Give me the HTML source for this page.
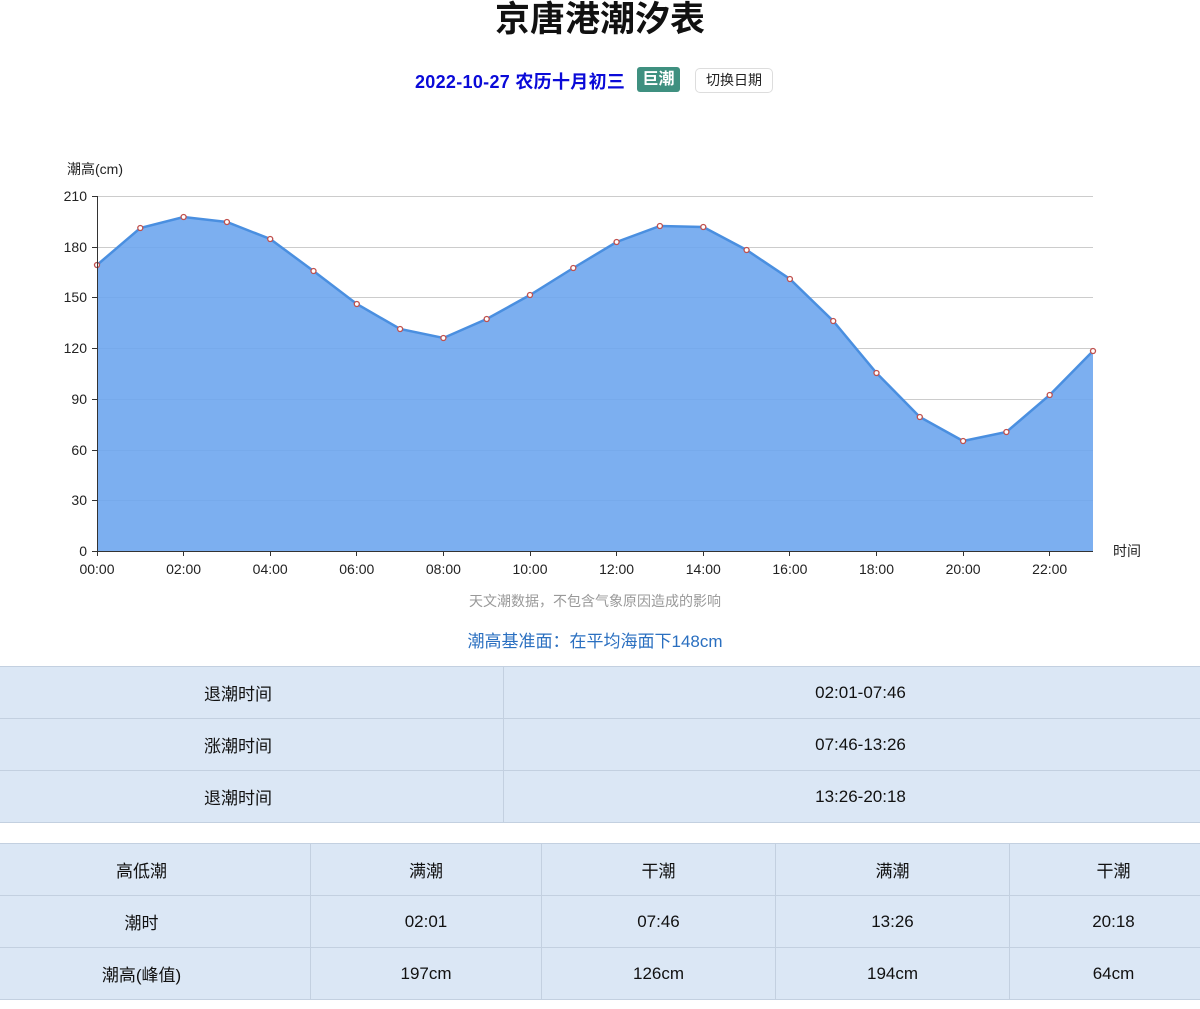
<!DOCTYPE html>
<html><head><meta charset="utf-8"><style>
body{margin:0;width:1200px;height:1009px;background:#fff;font-family:"Liberation Sans","Noto Sans CJK SC",sans-serif;position:relative;overflow:hidden;color:#111}
.a{position:absolute}
h1{position:absolute;top:-9px;left:0;width:1200px;text-align:center;font-size:35px;margin:0;font-weight:bold}
table{position:absolute;left:-28px;width:1246px;border-collapse:collapse;background:#dbe7f5}
td{border:1px solid #c3d0e0;height:51px;text-align:center;font-size:17px;padding:0}
</style></head><body>
<h1>京唐港潮汐表</h1>
<div class="a" style="top:68px;left:415px;font-size:18px;font-weight:bold;color:#0a0ad8;white-space:nowrap;letter-spacing:0.3px">2022-10-27 农历十月初三</div>
<div class="a" style="top:67px;left:637px;width:43px;height:25px;background:#3f9080;color:#fff;font-size:16px;font-weight:bold;text-align:center;line-height:25px;border-radius:3px">巨潮</div>
<div class="a" style="top:68px;left:695px;width:76px;height:23px;border:1px solid #ddd;border-radius:5px;font-size:14px;text-align:center;line-height:23px;color:#222">切换日期</div>
<svg class="a" style="top:0;left:0" width="1200" height="660" font-family="Liberation Sans,Noto Sans CJK SC,sans-serif">
<g stroke="#ccc" stroke-width="1">
<line x1="97" y1="196.5" x2="1093" y2="196.5"/><line x1="97" y1="247.5" x2="1093" y2="247.5"/><line x1="97" y1="297.5" x2="1093" y2="297.5"/><line x1="97" y1="348.5" x2="1093" y2="348.5"/><line x1="97" y1="399.5" x2="1093" y2="399.5"/><line x1="97" y1="450.5" x2="1093" y2="450.5"/><line x1="97" y1="500.5" x2="1093" y2="500.5"/>
</g>
<polygon fill="#6ea6ee" fill-opacity="0.9" points="97,551 97,265 140.3,228 183.6,217 226.9,222 270.2,239 313.5,271 356.8,304 400.1,329 443.4,338 486.7,319 530,295 573.3,268 616.6,242 659.9,226 703.3,227 746.6,250 789.9,279 833.2,321 876.5,373 919.8,417 963.1,441 1006.4,432 1049.7,395 1093,351 1093,551"/>
<polyline fill="none" stroke="#4a8fe0" stroke-width="2.5" points="97,265 140.3,228 183.6,217 226.9,222 270.2,239 313.5,271 356.8,304 400.1,329 443.4,338 486.7,319 530,295 573.3,268 616.6,242 659.9,226 703.3,227 746.6,250 789.9,279 833.2,321 876.5,373 919.8,417 963.1,441 1006.4,432 1049.7,395 1093,351"/>
<g fill="#fff" stroke="#c0504d" stroke-width="1.3">
<circle cx="97" cy="265" r="2.5"/><circle cx="140.3" cy="228" r="2.5"/><circle cx="183.6" cy="217" r="2.5"/><circle cx="226.9" cy="222" r="2.5"/><circle cx="270.2" cy="239" r="2.5"/><circle cx="313.5" cy="271" r="2.5"/><circle cx="356.8" cy="304" r="2.5"/><circle cx="400.1" cy="329" r="2.5"/><circle cx="443.4" cy="338" r="2.5"/><circle cx="486.7" cy="319" r="2.5"/><circle cx="530" cy="295" r="2.5"/><circle cx="573.3" cy="268" r="2.5"/><circle cx="616.6" cy="242" r="2.5"/><circle cx="659.9" cy="226" r="2.5"/><circle cx="703.3" cy="227" r="2.5"/><circle cx="746.6" cy="250" r="2.5"/><circle cx="789.9" cy="279" r="2.5"/><circle cx="833.2" cy="321" r="2.5"/><circle cx="876.5" cy="373" r="2.5"/><circle cx="919.8" cy="417" r="2.5"/><circle cx="963.1" cy="441" r="2.5"/><circle cx="1006.4" cy="432" r="2.5"/><circle cx="1049.7" cy="395" r="2.5"/><circle cx="1093" cy="351" r="2.5"/>
</g>
<g stroke="#333" stroke-width="1">
<line x1="97.5" y1="196" x2="97.5" y2="551"/><line x1="97" y1="551.5" x2="1093" y2="551.5"/>
<line x1="92" y1="196.5" x2="97" y2="196.5"/><line x1="92" y1="247.5" x2="97" y2="247.5"/><line x1="92" y1="297.5" x2="97" y2="297.5"/><line x1="92" y1="348.5" x2="97" y2="348.5"/><line x1="92" y1="399.5" x2="97" y2="399.5"/><line x1="92" y1="450.5" x2="97" y2="450.5"/><line x1="92" y1="500.5" x2="97" y2="500.5"/><line x1="92" y1="551.5" x2="97" y2="551.5"/>
<line x1="97.5" y1="551" x2="97.5" y2="556"/><line x1="183.5" y1="551" x2="183.5" y2="556"/><line x1="270.5" y1="551" x2="270.5" y2="556"/><line x1="356.5" y1="551" x2="356.5" y2="556"/><line x1="443.5" y1="551" x2="443.5" y2="556"/><line x1="530.5" y1="551" x2="530.5" y2="556"/><line x1="616.5" y1="551" x2="616.5" y2="556"/><line x1="703.5" y1="551" x2="703.5" y2="556"/><line x1="789.5" y1="551" x2="789.5" y2="556"/><line x1="876.5" y1="551" x2="876.5" y2="556"/><line x1="963.5" y1="551" x2="963.5" y2="556"/><line x1="1049.5" y1="551" x2="1049.5" y2="556"/>
</g>
<g font-size="14" fill="#222" text-anchor="end">
<text x="87" y="201">210</text><text x="87" y="252">180</text><text x="87" y="302">150</text><text x="87" y="353">120</text><text x="87" y="404">90</text><text x="87" y="455">60</text><text x="87" y="505">30</text><text x="87" y="556">0</text>
</g>
<g font-size="14" fill="#222" text-anchor="middle">
<text x="97" y="574">00:00</text><text x="183.6" y="574">02:00</text><text x="270.2" y="574">04:00</text><text x="356.8" y="574">06:00</text><text x="443.4" y="574">08:00</text><text x="530" y="574">10:00</text><text x="616.6" y="574">12:00</text><text x="703.3" y="574">14:00</text><text x="789.9" y="574">16:00</text><text x="876.5" y="574">18:00</text><text x="963.1" y="574">20:00</text><text x="1049.7" y="574">22:00</text>
</g>
<text x="67" y="174" font-size="14" fill="#222">潮高(cm)</text>
<text x="1113" y="556" font-size="14" fill="#222">时间</text>
<text x="595" y="606" font-size="14" fill="#999" text-anchor="middle">天文潮数据，不包含气象原因造成的影响</text>
<text x="595" y="647" font-size="17" fill="#2a6fc0" text-anchor="middle">潮高基准面：在平均海面下148cm</text>
</svg>
<table style="top:666px"><tr><td style="width:530px">退潮时间</td><td>02:01-07:46</td></tr><tr><td>涨潮时间</td><td>07:46-13:26</td></tr><tr><td>退潮时间</td><td>13:26-20:18</td></tr></table>
<table style="top:843px"><tr><td style="width:337px">高低潮</td><td style="width:230px">满潮</td><td style="width:233px">干潮</td><td style="width:233px">满潮</td><td>干潮</td></tr>
<tr><td>潮时</td><td>02:01</td><td>07:46</td><td>13:26</td><td>20:18</td></tr>
<tr><td>潮高(峰值)</td><td>197cm</td><td>126cm</td><td>194cm</td><td>64cm</td></tr></table>
</body></html>
